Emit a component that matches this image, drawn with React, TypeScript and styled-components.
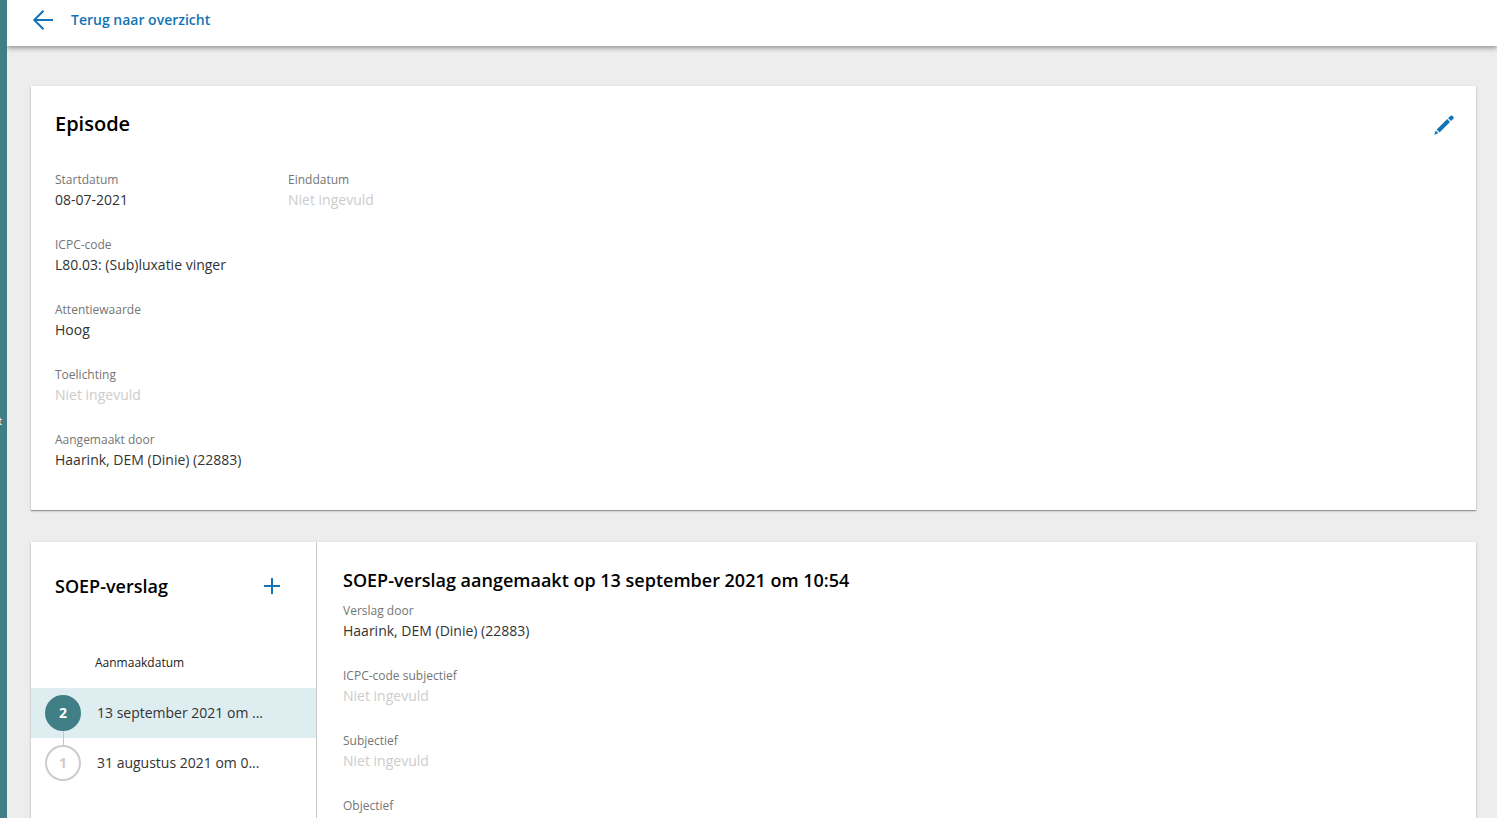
import React from "react";
import styled, { createGlobalStyle } from "styled-components";

const GlobalStyle = createGlobalStyle`
  *, *::before, *::after { box-sizing: border-box; }
  body {
    margin: 0;
    background: #ededed;
    color: #333;
    font-family: "Open Sans", sans-serif;
    font-size: 14px;
    line-height: 20px;
  }
  h1, h2, dl, dt, dd, ol { margin: 0; padding: 0; }
`;

const Shell = styled.div`
  display: flex;
  height: 100vh;
  overflow: hidden;
`;

const Sidebar = styled.aside`
  display: flex;
  flex: none;
  align-items: center;
  justify-content: flex-end;
  width: 7px;
  padding: 24px 5px 0 0;
  overflow: hidden;
  background: #407f86;
  color: #fff;
  font-size: 10px;
  z-index: 2;
`;

const Page = styled.div`
  display: flex;
  flex: 1;
  flex-direction: column;
  min-width: 0;
`;

const TopBar = styled.header`
  display: flex;
  flex: none;
  align-items: center;
  height: 46px;
  padding: 0 24px 6px;
  background: #fff;
  box-shadow: 0 2px 5px rgba(0, 0, 0, 0.4);
  z-index: 1;
`;

const BackLink = styled.a`
  display: flex;
  align-items: center;
  gap: 16px;
  color: #1274b5;
  font-weight: 600;
  text-decoration: none;
`;

const Content = styled.main`
  display: flex;
  flex: 1;
  flex-direction: column;
  gap: 32px;
  min-height: 0;
  padding: 40px 21px 24px 24px;
  overflow: hidden;
`;

const Card = styled.section`
  flex: none;
  background: #fff;
  box-shadow: 0 1px 1px rgba(0, 0, 0, 0.3), 0 1px 3px rgba(0, 0, 0, 0.14);
`;

const EpisodeCard = styled(Card)`
  padding: 22px 20px 40px 24px;
`;

const ReportCard = styled(Card)`
  display: flex;
`;

const CardHeader = styled.div`
  display: flex;
  align-items: center;
  justify-content: space-between;
  height: 32px;
`;

const Title = styled.h1`
  color: #000;
  font-size: 20px;
  font-weight: 600;
  line-height: 32px;
`;

const Subtitle = styled.h2`
  color: #000;
  font-size: 18px;
  font-weight: 600;
  line-height: 24px;
`;

const IconButton = styled.button`
  display: flex;
  align-items: center;
  justify-content: center;
  width: 24px;
  height: 24px;
  padding: 0;
  border: 0;
  background: none;
  color: #1274b5;
  cursor: pointer;
`;

const Fields = styled.dl<{ $top: number }>`
  display: grid;
  grid-template-columns: 209px 1fr;
  column-gap: 24px;
  row-gap: 25px;
  padding-top: ${(p) => p.$top}px;
`;

const FieldBox = styled.div<{ $wide?: boolean }>`
  grid-column: ${(p) => (p.$wide ? "1 / -1" : "auto")};
`;

const Label = styled.dt`
  color: #757575;
  font-size: 12px;
  line-height: 20px;
`;

const Value = styled.dd<{ $empty: boolean }>`
  color: ${(p) => (p.$empty ? "#ccc" : "#333")};
`;

const Timeline = styled.div`
  flex: none;
  width: 286px;
  border-right: 1px solid #c8c8c8;
`;

const TimelineHeader = styled(CardHeader)`
  height: 88px;
  padding: 0 32px 0 24px;
`;

const ColumnHeader = styled.div`
  padding: 23px 16px 15px 64px;
  color: #222;
  font-size: 12px;
`;

const Reports = styled.ol`
  list-style: none;
`;

const ReportButton = styled.button<{ $active: boolean }>`
  display: flex;
  align-items: center;
  gap: 16px;
  width: 100%;
  height: 50px;
  padding: 0 48px 0 14px;
  border: 0;
  background: ${(p) => (p.$active ? "#deedf0" : "#fff")};
  color: #333;
  font: inherit;
  text-align: left;
  cursor: pointer;
`;

const Badge = styled.span<{ $active: boolean; $linked: boolean }>`
  position: relative;
  display: flex;
  flex: none;
  align-items: center;
  justify-content: center;
  width: 36px;
  height: 36px;
  border: 2px solid ${(p) => (p.$active ? "#407f86" : "#ccc")};
  border-radius: 50%;
  background: ${(p) => (p.$active ? "#407f86" : "#fff")};
  color: ${(p) => (p.$active ? "#fff" : "#ccc")};
  font-size: 14px;
  font-weight: 700;

  &::after {
    content: "";
    display: ${(p) => (p.$linked ? "block" : "none")};
    position: absolute;
    top: 34px;
    left: 16px;
    width: 1px;
    height: 14px;
    background: #c4c4c4;
  }
`;

const ReportDate = styled.span`
  white-space: nowrap;
`;

const Detail = styled.article`
  flex: 1;
  min-width: 0;
  padding: 26px 24px 24px 26px;
`;

type FieldProps = { label: string; value?: string; wide?: boolean; labelOnly?: boolean };

const Field = ({ label, value, wide, labelOnly }: FieldProps) => (
  <FieldBox $wide={wide}>
    <Label>{label}</Label>
    {!labelOnly && <Value $empty={!value}>{value ?? "Niet ingevuld"}</Value>}
  </FieldBox>
);

const ArrowIcon = () => (
  <svg width="24" height="24" viewBox="0 0 24 24" fill="none" stroke="currentColor" strokeWidth="2" aria-hidden="true">
    <path d="M22 12H3.5M12.5 2.8L3.3 12l9.2 9.2" />
  </svg>
);

const PencilIcon = () => (
  <svg width="24" height="24" viewBox="0 0 24 24" fill="currentColor" aria-hidden="true">
    <path d="M2.2 22.8l1.5-4.2 2.7 2.7zM4.7 17.6L15.2 7.1l2.8 2.8L7.5 20.4zM16.1 6.2l2.2-2.2q1.2-1 2.3 0l.6.6q1 1.1 0 2.3l-2.2 2.2z" />
  </svg>
);

const PlusIcon = () => (
  <svg width="24" height="24" viewBox="0 0 24 24" fill="none" stroke="currentColor" strokeWidth="2" aria-hidden="true">
    <path d="M12 4v16M4 12h16" />
  </svg>
);

const reports = [
  { number: 2, date: "13 september 2021 om ..." },
  { number: 1, date: "31 augustus 2021 om 0..." },
];

export default function App() {
  const [selected, setSelected] = React.useState(2);

  return (
    <>
      <GlobalStyle />
      <Shell>
        <Sidebar>t</Sidebar>
        <Page>
          <TopBar>
            <BackLink href="#overzicht">
              <ArrowIcon />
              Terug naar overzicht
            </BackLink>
          </TopBar>
          <Content>
            <EpisodeCard>
              <CardHeader>
                <Title>Episode</Title>
                <IconButton type="button" aria-label="Episode bewerken">
                  <PencilIcon />
                </IconButton>
              </CardHeader>
              <Fields $top={30}>
                <Field label="Startdatum" value="08-07-2021" />
                <Field label="Einddatum" />
                <Field wide label="ICPC-code" value="L80.03: (Sub)luxatie vinger" />
                <Field wide label="Attentiewaarde" value="Hoog" />
                <Field wide label="Toelichting" />
                <Field wide label="Aangemaakt door" value="Haarink, DEM (Dinie) (22883)" />
              </Fields>
            </EpisodeCard>
            <ReportCard>
              <Timeline>
                <TimelineHeader>
                  <Subtitle>SOEP-verslag</Subtitle>
                  <IconButton type="button" aria-label="SOEP-verslag toevoegen">
                    <PlusIcon />
                  </IconButton>
                </TimelineHeader>
                <ColumnHeader>Aanmaakdatum</ColumnHeader>
                <Reports>
                  {reports.map((report, index) => (
                    <li key={report.number}>
                      <ReportButton
                        type="button"
                        $active={report.number === selected}
                        onClick={() => setSelected(report.number)}
                      >
                        <Badge $active={report.number === selected} $linked={index < reports.length - 1}>
                          {report.number}
                        </Badge>
                        <ReportDate>{report.date}</ReportDate>
                      </ReportButton>
                    </li>
                  ))}
                </Reports>
              </Timeline>
              <Detail>
                <Subtitle>SOEP-verslag aangemaakt op 13 september 2021 om 10:54</Subtitle>
                <Fields $top={9}>
                  <Field wide label="Verslag door" value="Haarink, DEM (Dinie) (22883)" />
                  <Field wide label="ICPC-code subjectief" />
                  <Field wide label="Subjectief" />
                  <Field wide labelOnly label="Objectief" />
                </Fields>
              </Detail>
            </ReportCard>
          </Content>
        </Page>
      </Shell>
    </>
  );
}
